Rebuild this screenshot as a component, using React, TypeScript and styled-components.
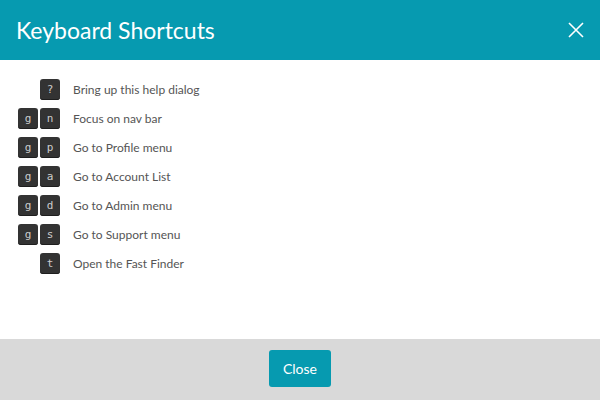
import React from "react";
import styled, { createGlobalStyle } from "styled-components";

const Global = createGlobalStyle`
  html, body { margin: 0; padding: 0; background: #fff; }
  body { font-family: Lato, "Open Sans", sans-serif; }
`;

const Dialog = styled.div`
  width: 600px;
  height: 400px;
  display: flex;
  flex-direction: column;
  background: #fff;
`;

const Header = styled.header`
  height: 60px;
  background: #069ab0;
  display: flex;
  align-items: center;
  justify-content: space-between;
  padding: 0 16px 0 16px;
  box-sizing: border-box;
`;

const Title = styled.h1`
  margin: 0;
  font-family: Lato, sans-serif;
  font-weight: 400;
  font-size: 23px;
  color: #fff;
  line-height: 1;
`;

const CloseX = styled.button`
  background: none;
  border: 0;
  padding: 0;
  width: 16px;
  height: 16px;
  display: flex;
  cursor: pointer;
`;

const Body = styled.main`
  flex: 1;
  padding: 19px 18px 0;
  display: flex;
  flex-direction: column;
  gap: 8px;
`;

const Row = styled.div`
  display: flex;
  align-items: center;
  height: 21px;
`;

const Keys = styled.div`
  width: 42px;
  display: flex;
  justify-content: flex-end;
  gap: 2px;
  margin-right: 13px;
`;

const Key = styled.kbd`
  width: 20px;
  height: 21px;
  box-sizing: border-box;
  display: flex;
  align-items: center;
  justify-content: center;
  background: #333;
  color: #ccc;
  border-radius: 3px;
  box-shadow: inset 0 -1px 0 #1e1e1e;
  font-family: "DejaVu Sans Mono", monospace;
  font-size: 11px;
`;

const Label = styled.span`
  font-family: Lato, sans-serif;
  font-size: 12px;
  color: #555;
`;

const Footer = styled.footer`
  height: 61px;
  box-sizing: border-box;
  padding-top: 11px;
  background: #d9d9d9;
  display: flex;
  align-items: flex-start;
  justify-content: center;
`;

const Button = styled.button`
  width: 62px;
  height: 37px;
  background: #069ab0;
  color: #fff;
  border: 0;
  border-radius: 3px;
  font-family: Lato, sans-serif;
  font-size: 14px;
  cursor: pointer;
`;

const shortcuts: { keys: string[]; label: string }[] = [
  { keys: ["?"], label: "Bring up this help dialog" },
  { keys: ["g", "n"], label: "Focus on nav bar" },
  { keys: ["g", "p"], label: "Go to Profile menu" },
  { keys: ["g", "a"], label: "Go to Account List" },
  { keys: ["g", "d"], label: "Go to Admin menu" },
  { keys: ["g", "s"], label: "Go to Support menu" },
  { keys: ["t"], label: "Open the Fast Finder" },
];

export default function App() {
  return (
    <>
      <Global />
      <Dialog>
        <Header>
          <Title>Keyboard Shortcuts</Title>
          <CloseX aria-label="Close">
            <svg width="16" height="16" viewBox="0 0 16 16">
              <path d="M1 1L15 15M15 1L1 15" stroke="#fff" strokeWidth="1.6" />
            </svg>
          </CloseX>
        </Header>
        <Body>
          {shortcuts.map((s) => (
            <Row key={s.label}>
              <Keys>
                {s.keys.map((k, i) => (
                  <Key key={i}>{k}</Key>
                ))}
              </Keys>
              <Label>{s.label}</Label>
            </Row>
          ))}
        </Body>
        <Footer>
          <Button>Close</Button>
        </Footer>
      </Dialog>
    </>
  );
}
